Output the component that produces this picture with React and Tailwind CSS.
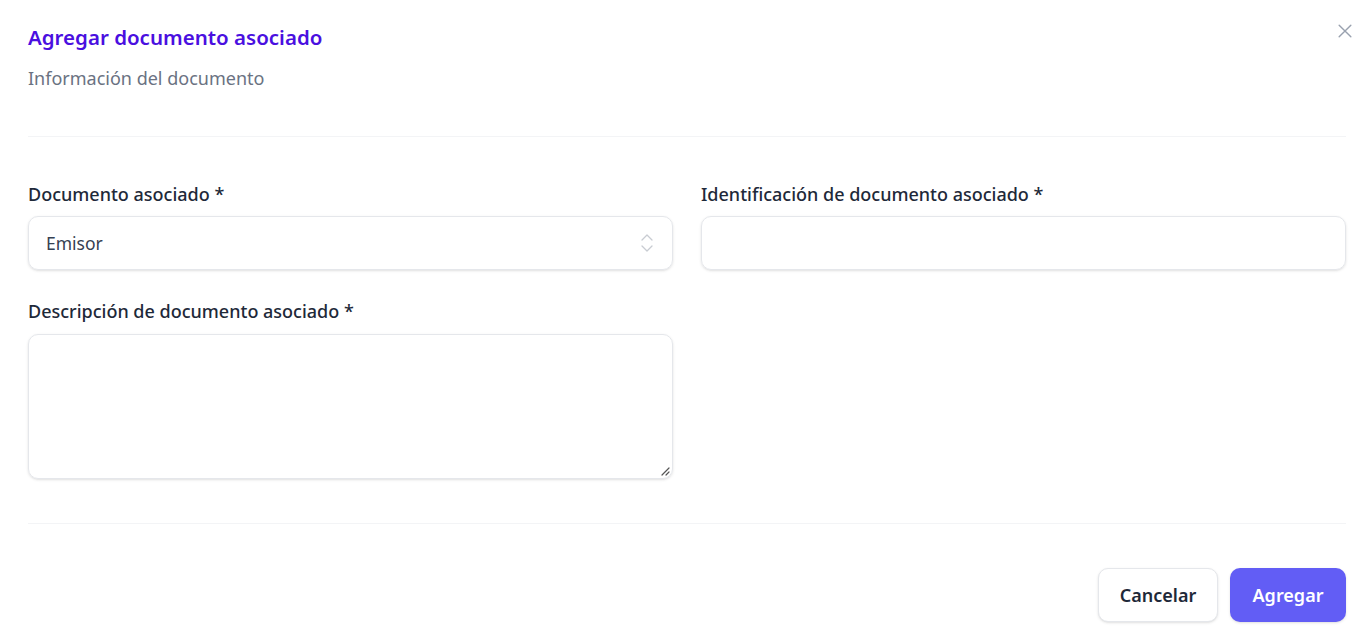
import React from "react";

export default function App() {
  const font = { fontFamily: '"Noto Sans", "Open Sans", sans-serif' };
  return (
    <div className="relative w-[1368px] h-[639px] bg-white overflow-hidden" style={font}>
      <button className="absolute right-[13px] top-[21px] text-gray-400">
        <svg width="20" height="20" viewBox="0 0 24 24" fill="none" stroke="currentColor" strokeWidth="1.7" strokeLinecap="round">
          <path d="M5 5l14 14M19 5L5 19" />
        </svg>
      </button>
      <div className="pl-[28px] pr-[22px]">
        <div className="pt-[23px] pb-[46px]">
          <h2 className="text-[20.5px] leading-[28px] font-semibold text-[#4a0fe0]">Agregar documento asociado</h2>
          <p className="mt-[15px] text-[18px] leading-[24px] text-gray-500">Información del documento</p>
        </div>
        <div className="border-t border-gray-100" />
        <div className="pt-[45px] pb-[44px] grid grid-cols-2 gap-x-[28px]">
          <div className="flex flex-col">
            <label className="text-[18px] leading-[24px] font-medium text-gray-800 mb-[10px]">Documento asociado *</label>
            <div className="h-[54px] rounded-[10px] border border-gray-200 shadow-sm flex items-center justify-between pl-[17px] pr-[18px]">
              <span className="text-[17.5px] text-gray-700">Emisor</span>
              <svg width="14" height="22" viewBox="0 0 14 22" fill="none" stroke="#c8ccd2" strokeWidth="1.3" strokeLinecap="round" strokeLinejoin="round">
                <path d="M2 8l5-5 5 5M2 14l5 5 5-5" />
              </svg>
            </div>
          </div>
          <div className="flex flex-col">
            <label className="text-[18px] leading-[24px] font-medium text-gray-800 mb-[10px]">Identificación de documento asociado *</label>
            <div className="h-[54px] rounded-[10px] border border-gray-200 shadow-sm" />
          </div>
          <div className="flex flex-col mt-[29px]">
            <label className="text-[18px] leading-[24px] font-medium text-gray-800 mb-[11px]">Descripción de documento asociado *</label>
            <div className="relative h-[145px] rounded-[10px] border border-gray-200 shadow-sm">
              <svg className="absolute right-[2px] bottom-[2px]" width="10" height="10" viewBox="0 0 10 10" stroke="#555" strokeWidth="1.2" strokeLinecap="round">
                <path d="M9 2L2 9M9 6L6 9" />
              </svg>
            </div>
          </div>
        </div>
        <div className="border-t border-gray-100" />
        <div className="pt-[44px] flex justify-end gap-[12px]">
          <button className="h-[54px] w-[120px] rounded-[10px] border border-gray-200 bg-white text-[18px] font-semibold text-gray-800 shadow-sm">Cancelar</button>
          <button className="h-[54px] w-[116px] rounded-[10px] bg-[#625df5] text-[18px] font-semibold text-white shadow-sm">Agregar</button>
        </div>
      </div>
    </div>
  );
}
